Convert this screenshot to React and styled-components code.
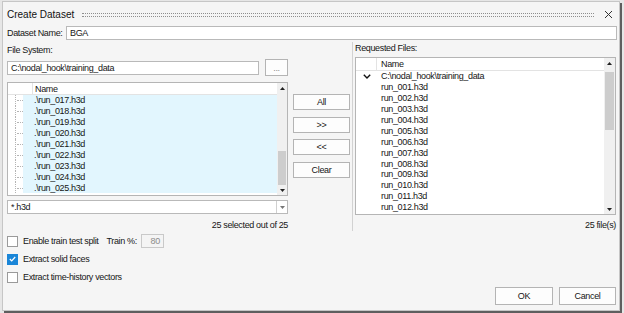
import React from "react";
import styled, { createGlobalStyle } from "styled-components";

const GlobalStyle = createGlobalStyle`
  html, body {
    margin: 0;
    padding: 0;
    background: #e6e6e6;
  }
  body {
    font-family: "Liberation Sans", Arial, sans-serif;
    font-size: 9px;
    letter-spacing: -0.35px;
    color: #161616;
  }
  * {
    box-sizing: border-box;
  }
`;

const leftFiles = [17, 18, 19, 20, 21, 22, 23, 24, 25].map(
  (n) => `.\\run_0${String(n).padStart(2, "0")}.h3d`
);
const rightFiles = Array.from({ length: 12 }, (_, i) => `run_${String(i + 1).padStart(3, "0")}.h3d`);

const Screen = styled.div`
  width: 624px;
  height: 313px;
  padding: 1px 0 0 2px;
  overflow: hidden;
`;

const Dialog = styled.div`
  width: 618px;
  height: 310px;
  background: #f5f5f5;
  border: 1px solid #c6c6c6;
  box-shadow: 2px 2px 0 #5e5e5e;
  padding: 0 2px 0 4px;
  display: flex;
  flex-direction: column;
`;

const TitleBar = styled.div`
  height: 23px;
  padding-top: 2px;
  display: flex;
  align-items: center;
  gap: 8px;
`;

const Title = styled.div`
  font-size: 10px;
  letter-spacing: 0;
  color: #111;
`;

const Grip = styled.div`
  flex: 1;
  height: 4px;
  border-top: 1px dotted #8f8f8f;
  border-bottom: 1px dotted #8f8f8f;
`;

const CloseButton = styled.div`
  width: 9px;
  height: 9px;
  margin: 0 4px 0 2px;
  display: flex;
`;

const NameRow = styled.div`
  margin-top: 1px;
  height: 14px;
  display: flex;
  align-items: center;
`;

const NameLabel = styled.div`
  width: 59px;
`;

const TextInput = styled.div`
  height: 14px;
  width: ${(p) => (p.$w ? `${p.$w}px` : "auto")};
  flex: ${(p) => (p.$w ? "none" : 1)};
  background: #fff;
  border: 1px solid #b9b9b9;
  padding-left: 3px;
  line-height: 12px;
  white-space: nowrap;
  overflow: hidden;
`;

const Main = styled.div`
  margin-top: 2px;
  display: flex;
`;

const LeftCol = styled.div`
  width: 281px;
  display: flex;
  flex-direction: column;
`;

const Label = styled.div`
  height: 12px;
  line-height: 12px;
  margin-top: ${(p) => p.$mt || 0}px;
`;

const PathRow = styled.div`
  margin-top: 3px;
  height: 17px;
  display: flex;
  align-items: center;
  gap: 6px;
`;

const Button = styled.div`
  width: ${(p) => p.$w}px;
  height: ${(p) => p.$h}px;
  background: #fdfdfd;
  border: 1px solid #b4b4b4;
  display: flex;
  align-items: center;
  justify-content: center;
  color: ${(p) => (p.$muted ? "#8a8a8a" : "#161616")};
`;

const ListBox = styled.div`
  margin-top: ${(p) => p.$mt}px;
  height: ${(p) => p.$h}px;
  background: #fff;
  border: 1px solid #b5b5b5;
  display: flex;
  overflow: hidden;
`;

const ListBody = styled.div`
  flex: 1;
  min-width: 0;
  display: flex;
  flex-direction: column;
  overflow: hidden;
`;

const HeaderRow = styled.div`
  height: ${(p) => p.$h}px;
  flex-shrink: 0;
  display: flex;
  border-bottom: 1px solid #e3e3e3;
`;

const HeadCell = styled.div`
  width: ${(p) => (p.$w ? `${p.$w}px` : "auto")};
  flex: ${(p) => (p.$w ? "none" : 1)};
  border-right: ${(p) => (p.$w ? "1px solid #e3e3e3" : "none")};
  padding-left: ${(p) => p.$pl || 0}px;
  display: flex;
  align-items: center;
`;

const Row = styled.div`
  height: 10.9px;
  flex-shrink: 0;
  display: flex;
  align-items: center;
  white-space: nowrap;
`;

const TreeCell = styled.div`
  position: relative;
  width: ${(p) => p.$w}px;
  height: 100%;
  flex-shrink: 0;
  display: flex;
  align-items: center;
  justify-content: center;
  &::before {
    content: ${(p) => (p.$lines ? '""' : "none")};
    position: absolute;
    left: 7px;
    top: 0;
    bottom: 0;
    border-left: 1px dotted #b4b4b4;
  }
  &::after {
    content: ${(p) => (p.$lines ? '""' : "none")};
    position: absolute;
    left: 9px;
    top: 50%;
    width: 6px;
    border-top: 1px dotted #b4b4b4;
  }
`;

const NameCell = styled.div`
  flex: 1;
  height: 100%;
  display: flex;
  align-items: center;
  padding-left: ${(p) => p.$pl}px;
  background: ${(p) => (p.$selected ? "#e2f6fe" : "transparent")};
`;

const ScrollBar = styled.div`
  width: ${(p) => p.$w}px;
  flex-shrink: 0;
  background: #f0f0f0;
  display: flex;
  flex-direction: column;
`;

const ScrollArrow = styled.div`
  height: 10px;
  flex-shrink: 0;
  display: flex;
  align-items: center;
  justify-content: center;
`;

const ScrollTrack = styled.div`
  flex: 1;
  padding: 0 1px;
`;

const ScrollThumb = styled.div`
  margin-top: ${(p) => p.$top}px;
  height: ${(p) => p.$len}px;
  background: #cdcdcd;
`;

const Combo = styled.div`
  margin-top: 4px;
  height: 14px;
  display: flex;
  background: #fff;
  border: 1px solid #b9b9b9;
`;

const ComboText = styled.div`
  flex: 1;
  padding-left: 3px;
  line-height: 12px;
`;

const ComboDrop = styled.div`
  width: 11px;
  border-left: 1px solid #d0d0d0;
  display: flex;
  align-items: center;
  justify-content: center;
`;

const CountRow = styled.div`
  margin-top: ${(p) => p.$mt}px;
  height: 12px;
  line-height: 12px;
  text-align: right;
`;

const MidCol = styled.div`
  width: 57px;
  margin-left: 5px;
  padding-top: 52px;
  display: flex;
  flex-direction: column;
  gap: 6.67px;
`;

const RightCol = styled.div`
  flex: 1;
  height: 189px;
  margin-left: 2px;
  padding-left: 2px;
  padding-right: 1px;
  border-left: 1px solid #d2d2d2;
  display: flex;
  flex-direction: column;
`;

const Options = styled.div`
  margin-top: 3px;
  display: flex;
  flex-direction: column;
  gap: 4px;
`;

const OptionRow = styled.div`
  height: 14px;
  display: flex;
  align-items: center;
`;

const CheckBox = styled.div`
  width: 11px;
  height: 11px;
  border: 1px solid ${(p) => (p.$checked ? "#1a86d8" : "#9a9a9a")};
  background: ${(p) => (p.$checked ? "#1a86d8" : "#fff")};
  margin-right: 5px;
  display: flex;
  align-items: center;
  justify-content: center;
`;

const TrainLabel = styled.div`
  margin-left: 8px;
  margin-right: 4px;
`;

const SmallInput = styled.div`
  width: 23px;
  height: 14px;
  border: 1px solid #c9c9c9;
  background: #f4f4f4;
  color: #8c8c8c;
  text-align: right;
  padding-right: 3px;
  line-height: 12px;
`;

const Footer = styled.div`
  margin-top: 3px;
  display: flex;
  justify-content: flex-end;
  gap: 6px;
  padding-right: 1px;
`;

const Chevron = ({ up, color = "#222" }) => (
  <svg width="5" height="3" viewBox="0 0 5 3">
    <path d={up ? "M0 3 L2.5 0 L5 3 Z" : "M0 0 L2.5 3 L5 0 Z"} fill={color} />
  </svg>
);

const Expand = () => (
  <svg width="8" height="5" viewBox="0 0 8 5">
    <path d="M0.8 0.8 L4 4 L7.2 0.8" fill="none" stroke="#111" strokeWidth="1.4" />
  </svg>
);

const Scroll = ({ w, top, len }) => (
  <ScrollBar $w={w}>
    <ScrollArrow>
      <Chevron up />
    </ScrollArrow>
    <ScrollTrack>
      <ScrollThumb $top={top} $len={len} />
    </ScrollTrack>
    <ScrollArrow>
      <Chevron />
    </ScrollArrow>
  </ScrollBar>
);

const App = () => {
  return (
    <>
      <GlobalStyle />
      <Screen>
        <Dialog>
          <TitleBar>
            <Title>Create Dataset</Title>
            <Grip />
            <CloseButton>
              <svg width="9" height="9" viewBox="0 0 9 9">
                <path d="M1 1 L8 8 M8 1 L1 8" stroke="#333" strokeWidth="1" />
              </svg>
            </CloseButton>
          </TitleBar>

          <NameRow>
            <NameLabel>Dataset Name:</NameLabel>
            <TextInput>BGA</TextInput>
          </NameRow>

          <Main>
            <LeftCol>
              <Label $mt={2}>File System:</Label>
              <PathRow>
                <TextInput $w={252}>C:\nodal_hook\training_data</TextInput>
                <Button $w={23} $h={17} $muted>...</Button>
              </PathRow>
              <ListBox $mt={6} $h={114}>
                <ListBody>
                  <HeaderRow $h={12}>
                    <HeadCell $w={25} />
                    <HeadCell $pl={2}>Name</HeadCell>
                  </HeaderRow>
                  {leftFiles.map((f) => (
                    <Row key={f}>
                      <TreeCell $w={15} $lines />
                      <NameCell $selected $pl={11}>{f}</NameCell>
                    </Row>
                  ))}
                </ListBody>
                <Scroll w={10} top={58} len={34} />
              </ListBox>
              <Combo>
                <ComboText>*.h3d</ComboText>
                <ComboDrop>
                  <Chevron color="#777" />
                </ComboDrop>
              </Combo>
              <CountRow $mt={5}>25 selected out of 25</CountRow>
            </LeftCol>

            <MidCol>
              <Button $w={57} $h={16}>All</Button>
              <Button $w={57} $h={16}>&gt;&gt;</Button>
              <Button $w={57} $h={16}>&lt;&lt;</Button>
              <Button $w={57} $h={16}>Clear</Button>
            </MidCol>

            <RightCol>
              <Label>Requested Files:</Label>
              <ListBox $mt={3} $h={158}>
                <ListBody>
                  <HeaderRow $h={13}>
                    <HeadCell $w={21} />
                    <HeadCell $pl={4}>Name</HeadCell>
                  </HeaderRow>
                  <Row>
                    <TreeCell $w={22}>
                      <Expand />
                    </TreeCell>
                    <NameCell $pl={3}>C:\nodal_hook\training_data</NameCell>
                  </Row>
                  {rightFiles.map((f) => (
                    <Row key={f}>
                      <TreeCell $w={22} />
                      <NameCell $pl={3}>{f}</NameCell>
                    </Row>
                  ))}
                </ListBody>
                <Scroll w={11} top={4} len={58} />
              </ListBox>
              <CountRow $mt={4}>25 file(s)</CountRow>
            </RightCol>
          </Main>

          <Options>
            <OptionRow>
              <CheckBox />
              Enable train test split
              <TrainLabel>Train %:</TrainLabel>
              <SmallInput>80</SmallInput>
            </OptionRow>
            <OptionRow>
              <CheckBox $checked>
                <svg width="7" height="6" viewBox="0 0 7 6">
                  <path d="M0.8 3 L2.7 4.9 L6.2 1" fill="none" stroke="#fff" strokeWidth="1.2" />
                </svg>
              </CheckBox>
              Extract solid faces
            </OptionRow>
            <OptionRow>
              <CheckBox />
              Extract time-history vectors
            </OptionRow>
          </Options>

          <Footer>
            <Button $w={58} $h={18}>OK</Button>
            <Button $w={57} $h={18}>Cancel</Button>
          </Footer>
        </Dialog>
      </Screen>
    </>
  );
};

export default App;
